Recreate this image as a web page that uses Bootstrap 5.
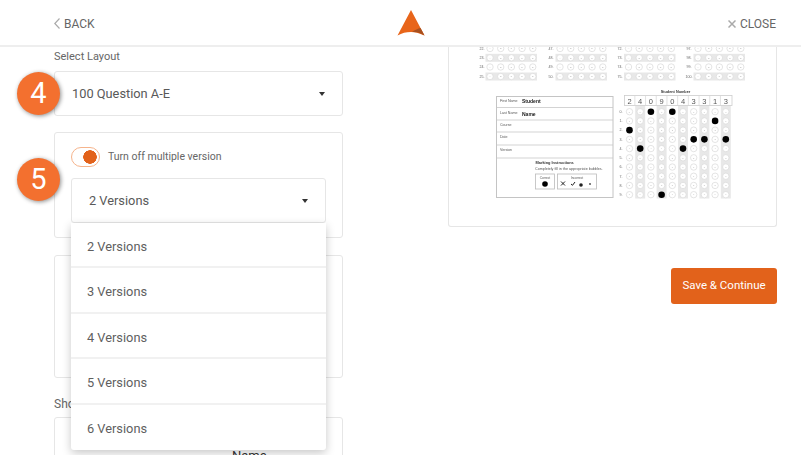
<!DOCTYPE html>
<html>

<head>
    <meta charset="UTF-8">
    <meta name="viewport" content="width=device-width, initial-scale=1.0">
    <title>Select Layout</title>
    <link href="https://cdn.jsdelivr.net/npm/bootstrap@5.3.0/dist/css/bootstrap.min.css" rel="stylesheet">
    <style>
        html, body { height: 100%; }
        body { font-family: Roboto, "Liberation Sans", sans-serif; color: #666; background: #fff; overflow: hidden; }
        .top-bar { height: 47px; padding: 2px 25px 0 54px; background: #fff; border-bottom: 2px solid #eee; }
        .top-link { font-size: 12px; color: #666; text-decoration: none; line-height: 1; }
        .page-body { height: 408px; overflow: hidden; padding: 0 24px 0 54px; }
        .left-side { width: 289px; position: relative; flex: none; }
        .right-side { width: 329px; flex: none; }
        .field-label { font-size: 11px; line-height: 14px; margin: 3px 0 7px; color: #666; }
        .box { border: 1px solid #e6e6e6; border-radius: 3px; background: #fff; }
        .pick { height: 45px; width: 100%; padding: 0 17px; font-size: 12.8px; color: #595959; background: #fff; border: 1px solid #e6e6e6; border-radius: 3px; }
        .pick:hover, .pick:active, .pick.show { color: #595959; background: #fff; border-color: #e6e6e6; }
        .pick::after { border-top-width: 4px; border-left-width: 3.5px; border-right-width: 3.5px; color: #333; margin: 0; }
        .version-box { height: 106px; margin-top: 16px; padding: 14px 16px 0; }
        .blank-box { height: 123px; margin-top: 17px; }
        .name-box { height: 60px; position: relative; }
        .name-text { position: absolute; left: 177px; top: 30px; font-size: 13px; color: #333; line-height: 15px; }
        .show-label { margin: 19px 0 6px; font-size: 12px; line-height: 14px; }
        .switch-row { min-height: 0; height: 20px; margin: 0 0 11px; padding: 0; gap: 8px; }
        .switch-row .form-check-input { float: none; margin: 0; width: 29px; height: 20px; background-color: #fff; border: 1px solid #f6b48c; border-radius: 10px; background-image: radial-gradient(circle, #e2621b 6.5px, transparent 7px); background-size: 18px 18px; background-position: right 0 center; box-shadow: none; }
        .switch-row .form-check-label { font-size: 10.5px; color: #666; }
        .version-menu { width: 100%; top: 100%; left: 0; padding: 0; margin: 0; border: 0; border-radius: 0 0 3px 3px; box-shadow: 0 3px 10px rgba(0, 0, 0, .22); z-index: 5; }
        .version-menu .dropdown-item { height: 45.4px; padding: 0 16px; line-height: 48px; font-size: 12.8px; color: #5f5f5f; border-bottom: 2px solid #f1f1f1; }
        .version-menu li:last-child .dropdown-item { border-bottom: 0; }
        .step-dot { position: absolute; left: -37px; width: 43px; height: 43px; border-radius: 50%; background: #f3702f; color: #fff; font-size: 29px; line-height: 43px; text-align: center; box-shadow: 1px 1px 4px rgba(0, 0, 0, .45); z-index: 6; }
        .step-four { top: 25px; }
        .step-five { top: 111px; }
        .sheet-box { height: 180px; border-top: 0; border-radius: 0 0 3px 3px; }
        .sheet-box svg { display: block; filter: blur(.3px); }
        .sheet-box text { font-family: "Liberation Sans", sans-serif; }
        .save-btn { width: 106px; height: 36px; margin-top: 41px; padding: 0; font-size: 11.5px; color: #fff; background: #e2621b; border: 0; border-radius: 3px; }
        .save-btn:hover { color: #fff; background: #e2621b; }
    </style>
</head>

<body>
    <nav class="top-bar d-flex justify-content-between align-items-center">
        <a href="#" class="top-link d-flex align-items-center gap-1">
            <svg width="6" height="11" viewBox="0 0 6 11"><path d="M5.5 .5 .8 5.5l4.7 5" fill="none" stroke="#aaa" stroke-width="1.2"/></svg>
            BACK
        </a>
        <svg width="28" height="27" viewBox="0 0 28 27">
            <path d="M14 0 27.5 25.500C22 23 18 22 14 22 9 22 5 23 .5 25.500Z" fill="#e8651a"/>
            <path d="M15 22C20 21.500 24 23.500 27.500 25.500L23.500 18C21 18.500 18 20 15 22Z" fill="#a8501f"/>
        </svg>
        <a href="#" class="top-link d-flex align-items-center gap-1">
            <svg width="8" height="8" viewBox="0 0 8 8"><path d="M.5 .5l7 7M7.500 .5l-7 7" stroke="#aaa" stroke-width="1.500"/></svg>
            CLOSE
        </a>
    </nav>

    <div class="page-body d-flex justify-content-between">
        <!-- Columna izquierda -->
        <div class="left-side">
            <div class="step-dot step-four">4</div>
            <div class="step-dot step-five">5</div>

            <p class="field-label">Select Layout</p>
            <button type="button" class="btn pick dropdown-toggle d-flex justify-content-between align-items-center">100 Question A-E</button>

            <div class="box version-box">
                <div class="form-check form-switch switch-row d-flex align-items-center">
                    <input class="form-check-input" type="checkbox" id="multi" checked>
                    <label class="form-check-label" for="multi">Turn off multiple version</label>
                </div>
                <div class="dropdown position-relative">
                    <button type="button" class="btn pick dropdown-toggle d-flex justify-content-between align-items-center">2 Versions</button>
                    <ul class="dropdown-menu show version-menu" id="versions"></ul>
                </div>
            </div>

            <div class="box blank-box"></div>

            <p class="show-label">Show</p>
            <div class="box name-box"><span class="name-text">Name</span></div>
        </div>

        <!-- Columna derecha -->
        <div class="right-side d-flex flex-column align-items-end">
            <div class="box sheet-box w-100">
                <svg id="sheet" width="327" height="179" viewBox="449 47 327 179"></svg>
            </div>
            <button type="button" class="btn save-btn">Save &amp; Continue</button>
        </div>
    </div>

    <script src="https://cdn.jsdelivr.net/npm/bootstrap@5.3.0/dist/js/bootstrap.bundle.min.js"></script>
    <script>
        // Lista de versiones del menu
        document.getElementById('versions').innerHTML = [2, 3, 4, 5, 6]
            .map(n => '<li><a class="dropdown-item" href="#">' + n + ' Versions</a></li>').join('');

        // Hoja de respuestas dibujada en coordenadas de pantalla
        let s = '';
        function txt(x, y, size, t, fill, extra) {
            s += `<text x="${x}" y="${y}" font-size="${size}" fill="${fill || '#555'}" ${extra || ''}>${t}</text>`;
        }
        function bubble(x, y, letter, filled) {
            if (filled) { s += `<circle cx="${x}" cy="${y}" r="3.300" fill="#000"/>`; return; }
            s += `<circle cx="${x}" cy="${y}" r="3.200" fill="#fff" stroke="#d8d8d8" stroke-width=".7"/>`;
            txt(x, y + .8, 2.300, letter, '#b0b0b0', 'text-anchor="middle"');
        }

        // Preguntas
        const cols = [[482, 490, 22], [551, 560, 47], [620, 628.500, 72], [689, 698, 97]];
        const rowsY = [48.500, 57.800, 67, 76.500];
        cols.forEach(c => {
            rowsY.forEach((y, r) => {
                if (r % 2) s += `<rect x="${c[1] - 4.500}" y="${y - 4}" width="51.500" height="8" fill="#e8e8e8"/>`;
                txt(c[0], y + 1.300, 3.600, (c[2] + r) + '.', '#666', 'text-anchor="middle"');
                'ABCDE'.split('').forEach((l, i) => bubble(c[1] + i * 10.700, y, l, false));
            });
        });

        // Datos del alumno
        s += '<rect x="496.500" y="96.500" width="116.500" height="101" fill="#fff" stroke="#c4c4c4"/>';
        [107.500, 120, 132, 145, 158].forEach(y => { s += `<path d="M497 ${y}h116" stroke="#c8c8c8" stroke-width=".8"/>`; });
        txt(500, 102, 3.600, 'First Name');
        txt(522, 103, 5, 'Student', '#222', 'font-weight="bold"');
        txt(500, 114, 3.600, 'Last Name');
        txt(522, 115.500, 5, 'Name', '#222', 'font-weight="bold"');
        txt(500, 126, 3.600, 'Course');
        txt(500, 138, 3.600, 'Date');
        txt(500, 151, 3.600, 'Version');
        txt(535.500, 164, 3.900, 'Marking Instructions', '#333', 'font-weight="bold"');
        txt(535, 169.500, 3.700, 'Completely fill in the appropriate bubbles.');
        s += '<rect x="535.500" y="174" width="19" height="15" fill="#fff" stroke="#bbb" stroke-width=".8"/>';
        s += '<rect x="557.500" y="174" width="39" height="15" fill="#fff" stroke="#bbb" stroke-width=".8"/>';
        txt(545, 178.500, 3.200, 'Correct', '#555', 'text-anchor="middle"');
        txt(577, 178.500, 3.200, 'Incorrect', '#555', 'text-anchor="middle"');
        s += '<circle cx="545" cy="184" r="2.800" fill="#000"/>';
        s += '<path d="M561 181.500l4 4M565 181.500l-4 4" stroke="#222" stroke-width="1"/>';
        s += '<path d="M571 184l1.500 1.300 2.500-3.300" fill="none" stroke="#222" stroke-width="1"/>';
        s += '<circle cx="581" cy="185" r="1.800" fill="#222"/><circle cx="590" cy="184" r=".9" fill="#444"/>';

        // Numero de alumno
        txt(675.500, 93, 3.800, 'Student Number', '#333', 'text-anchor="middle" font-weight="bold"');
        const numero = '2409043313';
        const colX = i => 629.500 + i * 10.700;
        const filaY = f => 111.700 + f * 9.220;
        s += '<rect x="624.500" y="95.500" width="107.500" height="10" fill="#fff" stroke="#ccc" stroke-width=".8"/>';
        numero.split('').forEach((d, i) => {
            if (i) s += `<path d="M${colX(i) - 5.350} 96v9" stroke="#ccc" stroke-width=".6"/>`;
            if (i % 2) s += `<rect x="${colX(i) - 5}" y="106" width="10" height="92.500" fill="#e8e8e8"/>`;
            txt(colX(i), 103.500, 7.500, d, '#555', 'text-anchor="middle"');
        });
        for (let f = 0; f < 10; f++) {
            txt(621, filaY(f) + 1.300, 3.600, f + '.', '#666', 'text-anchor="middle"');
            numero.split('').forEach((d, i) => bubble(colX(i), filaY(f), f, Number(d) === f));
        }
        document.getElementById('sheet').innerHTML = s;
    </script>
</body>

</html>
